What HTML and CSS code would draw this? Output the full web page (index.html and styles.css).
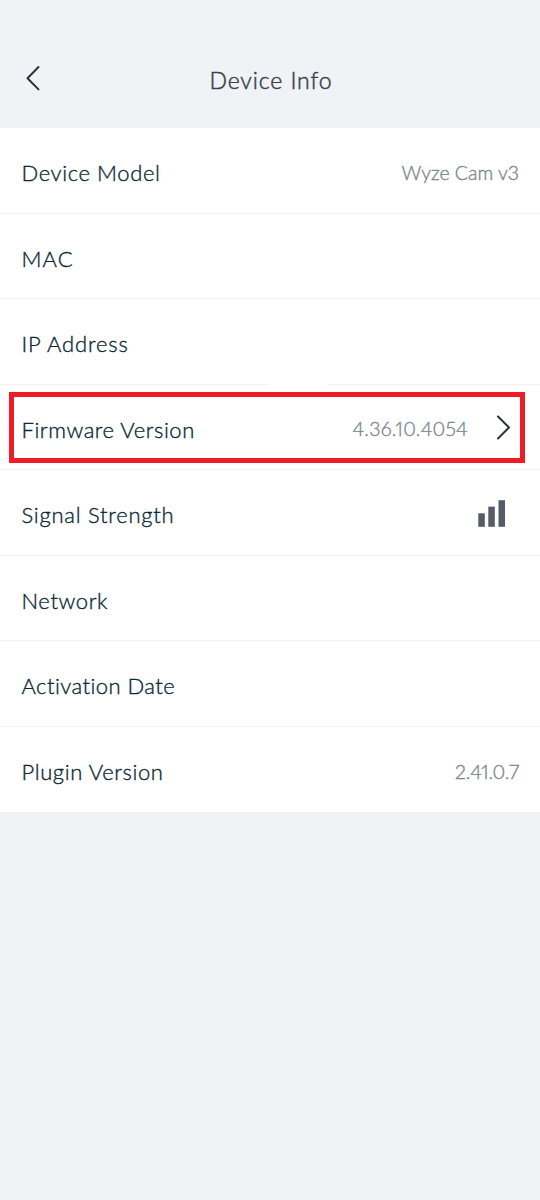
FILE: index.html
```html
<!DOCTYPE html>
<html lang="en">
<head>
    <meta charset="UTF-8">
    <meta name="viewport" content="width=device-width, initial-scale=1.0">
    <title>Device Info</title>
    <link rel="stylesheet" href="styles.css">
</head>
<body>
    <header class="header">
        <svg class="back" width="16" height="26" viewBox="0 0 16 26">
            <path d="M13.5 2 L2.5 13.2 L13.5 24.4"/>
        </svg>
        <h1>Device Info</h1>
    </header>

    <main class="list">
        <div class="row">
            <span class="label model">Device Model</span>
            <span class="value">Wyze Cam v3</span>
        </div>
        <div class="row">
            <span class="label mac">MAC</span>
        </div>
        <div class="row broken-line">
            <span class="label ip">IP Address</span>
        </div>
        <div class="row">
            <span class="label firmware">Firmware Version</span>
            <span class="value firmware-value">4.36.10.4054</span>
            <svg class="next" width="16" height="26" viewBox="0 0 16 26">
                <path d="M2 1.5 L13 12.5 L2 23.5"/>
            </svg>
            <div class="highlight"></div>
        </div>
        <div class="row">
            <span class="label signal">Signal Strength</span>
            <svg class="bars" width="28" height="28" viewBox="0 0 28 28">
                <rect x="0.3" y="13.3" width="6.5" height="13.5"/>
                <rect x="10.3" y="6.6" width="6.5" height="20.2"/>
                <rect x="20.5" y="0.2" width="6.5" height="26.6"/>
            </svg>
        </div>
        <div class="row">
            <span class="label network">Network</span>
        </div>
        <div class="row">
            <span class="label activation">Activation Date</span>
        </div>
        <div class="row">
            <span class="label plugin">Plugin Version</span>
            <span class="value plugin-value">2.41.0.7</span>
        </div>
    </main>
</body>
</html>
```

FILE: styles.css
```css
* {
    box-sizing: border-box;
}
body {
    margin: 0;
    min-height: 100vh;
    background-color: #eff3f6;
    font-family: 'Lato', sans-serif;
}
.header {
    display: grid;
    grid-template-columns: 60px 1fr 60px;
    align-items: center;
    height: 128px;
    padding-top: 32px;
}
.back {
    margin-left: 25px;
    margin-top: -4px;
}
.back path,
.next path {
    fill: none;
    stroke: #2d3136;
    stroke-width: 2;
    stroke-linecap: round;
    stroke-linejoin: round;
}
h1 {
    margin: 0;
    font-size: 23px;
    font-weight: 300;
    letter-spacing: 0.9px;
    padding-left: 2px;
    text-align: center;
    color: #3d414b;
    -webkit-text-stroke: 0.5px #3d414b;
}
.list {
    background-color: white;
}
.row {
    position: relative;
    display: flex;
    align-items: center;
    height: 85.5px;
    padding: 5px 21px 0 21.5px;
    border-bottom: 1px solid #f2f3f4;
}
.row:last-child {
    border-bottom: none;
}
.label {
    font-size: 22px;
    font-weight: 300;
    color: #0c2834;
    -webkit-text-stroke: 0.35px #0c2834;
    letter-spacing: 0.6px;
    white-space: nowrap;
}
.mac {
    letter-spacing: 1.1px;
}
.ip {
    letter-spacing: 0.84px;
}
.firmware {
    letter-spacing: 0.55px;
}
.signal {
    letter-spacing: 0.75px;
}
.activation {
    letter-spacing: 0.45px;
}
.value {
    margin-left: auto;
    margin-top: -1px;
    font-size: 19.5px;
    font-weight: 300;
    color: #7d8a90;
    -webkit-text-stroke: 0.4px #7d8a90;
    font-feature-settings: 'pnum' 1;
    white-space: nowrap;
}
.firmware-value {
    letter-spacing: 0.25px;
}
.plugin-value {
    letter-spacing: -0.15px;
}
.next {
    margin: -2px 7px 0 28px;
}
.bars {
    margin: -2px 13px 0 auto;
    fill: #555c67;
}
.broken-line::after {
    content: '';
    position: absolute;
    left: 269px;
    bottom: -1px;
    width: 58px;
    height: 1px;
    background-color: white;
}
.highlight {
    position: absolute;
    top: 7.5px;
    left: 9px;
    width: 516px;
    height: 71px;
    border: 5px solid #ee1c25;
}
```
